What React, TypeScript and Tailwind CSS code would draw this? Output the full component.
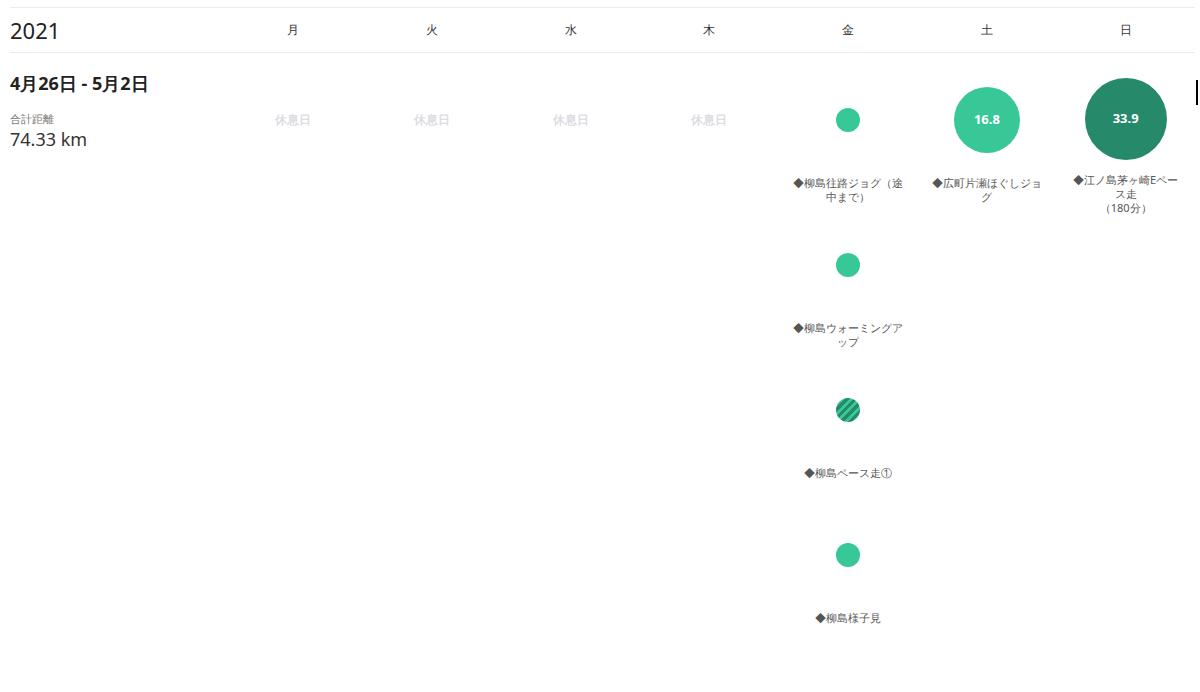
import React from "react";

type Run = { label: React.ReactNode; size: number; value?: string; dark?: boolean; striped?: boolean };

const days = ["月", "火", "水", "木", "金", "土", "日"];

const week: (Run[] | null)[] = [
  null,
  null,
  null,
  null,
  [
    { label: <>◆柳島往路ジョグ（途中まで）</>, size: 24 },
    { label: "◆柳島ウォーミングアップ", size: 24 },
    { label: "◆柳島ペース走①", size: 24, striped: true },
    { label: "◆柳島様子見", size: 24 },
  ],
  [{ label: "◆広町片瀬ほぐしジョグ", size: 66, value: "16.8" }],
  [{ label: <>◆江ノ島茅ヶ崎Eペース走<br />（180分）</>, size: 82, value: "33.9", dark: true }],
];

const Dot = ({ run }: { run: Run }) => (
  <div
    className={`rounded-full flex items-center justify-center text-white text-[13px] font-bold ${run.dark ? "bg-[#25896a]" : "bg-[#38c796]"}`}
    style={{
      width: run.size,
      height: run.size,
      backgroundImage: run.striped
        ? "repeating-linear-gradient(-45deg, #25896a 0 3px, #38c796 3px 6px)"
        : undefined,
    }}
  >
    {run.value}
  </div>
);

const App = () => {
  return (
    <div className="w-[1200px] h-[692px] bg-white relative overflow-hidden text-[#222] font-['Liberation_Sans','Noto_Sans_CJK_JP',sans-serif]">
      <div className="absolute right-[2px] top-[80px] w-[2px] h-[25px] bg-black" />
      <div className="mx-[10px] mt-[7px] w-[1185px]">
        {/* header */}
        <div className="grid grid-cols-[214px_repeat(7,1fr)] h-[46px] items-center border-y border-[#ececec]">
          <div className="text-[22px] text-[#222]">2021</div>
          {days.map((d) => (
            <div key={d} className="text-center text-[12px] text-[#333]">{d}</div>
          ))}
        </div>
        {/* week */}
        <div className="grid grid-cols-[214px_repeat(7,1fr)] pt-[17px]">
          <div>
            <div className="text-[18px] font-bold text-[#222]">4月26日 - 5月2日</div>
            <div className="mt-[14px] text-[11px] text-[#777]">合計距離</div>
            <div className="text-[18px] text-[#333] leading-[22px]">74.33 km</div>
          </div>
          {week.map((runs, i) => (
            <div key={i} className="flex flex-col">
              {runs === null ? (
                <div className="h-[100px] flex items-center justify-center text-[12px] font-bold text-[#dcdce3]">休息日</div>
              ) : (
                runs.map((r, j) => (
                  <div key={j} className="h-[145px] flex flex-col items-center">
                    <div className="h-[100px] flex items-center justify-center">
                      <Dot run={r} />
                    </div>
                    <div className="mt-[6px] px-[14px] text-center text-[11px] leading-[14px] text-[#555]">{r.label}</div>
                  </div>
                ))
              )}
            </div>
          ))}
        </div>
      </div>
    </div>
  );
};

export default App;
